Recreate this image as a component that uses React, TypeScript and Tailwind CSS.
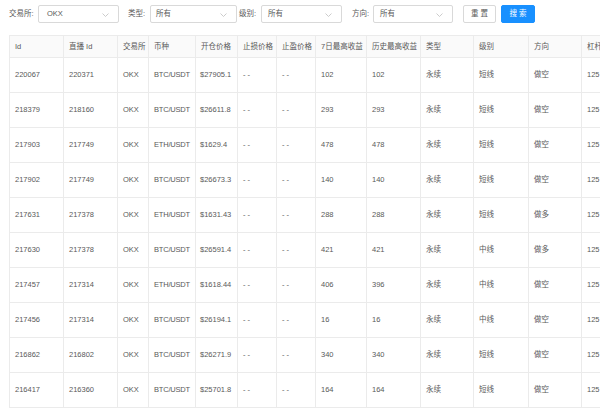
import React from "react";

const rows = [
  ["220067", "220371", "OKX", "BTC/USDT", "$27905.1", "102", "102", "永续", "短线", "做空"],
  ["218379", "218160", "OKX", "BTC/USDT", "$26611.8", "293", "293", "永续", "短线", "做空"],
  ["217903", "217749", "OKX", "ETH/USDT", "$1629.4", "478", "478", "永续", "短线", "做空"],
  ["217902", "217749", "OKX", "BTC/USDT", "$26673.3", "140", "140", "永续", "短线", "做空"],
  ["217631", "217378", "OKX", "ETH/USDT", "$1631.43", "288", "288", "永续", "短线", "做多"],
  ["217630", "217378", "OKX", "BTC/USDT", "$26591.4", "421", "421", "永续", "中线", "做多"],
  ["217457", "217314", "OKX", "ETH/USDT", "$1618.44", "406", "396", "永续", "中线", "做空"],
  ["217456", "217314", "OKX", "BTC/USDT", "$26194.1", "16", "16", "永续", "中线", "做空"],
  ["216862", "216802", "OKX", "BTC/USDT", "$26271.9", "340", "340", "永续", "短线", "做空"],
  ["216417", "216360", "OKX", "BTC/USDT", "$25701.8", "164", "164", "永续", "短线", "做空"],
];

const columns = [
  { title: "Id", w: "w-[54px]" },
  { title: "直播 Id", w: "w-[54px]" },
  { title: "交易所", w: "w-[31px]" },
  { title: "币种", w: "w-[47px]" },
  { title: "开仓价格", w: "w-[42px]" },
  { title: "止损价格", w: "w-[39px]" },
  { title: "止盈价格", w: "w-[39px]" },
  { title: "7日最高收益", w: "w-[51px]" },
  { title: "历史最高收益", w: "w-[54px]" },
  { title: "类型", w: "w-[53px]" },
  { title: "级别", w: "w-[55px]" },
  { title: "方向", w: "w-[53px]" },
  { title: "杠杆", w: "w-[50px]" },
];

function Chevron() {
  return (
    <svg width="7" height="4" viewBox="0 0 7 4" className="absolute right-[9px] top-[7px]">
      <path d="M0.5 0.5 L3.5 3.5 L6.5 0.5" fill="none" stroke="#bfbfbf" strokeWidth="0.8" />
    </svg>
  );
}

function Select({ value, width, pad }: { value: string; width: string; pad: string }) {
  return (
    <div className={`relative h-[18px] ${width} border border-[#d9d9d9] rounded-[2px] bg-white flex items-center ${pad} text-[#595959]`}>
      {value}
      <Chevron />
    </div>
  );
}

const cell = "border border-[#ebebeb] px-[5px] whitespace-nowrap overflow-hidden";

export default function App() {
  return (
    <div className="w-[600px] h-[413px] overflow-hidden bg-white pt-[5px] text-[7.5px] text-[#595959] [font-family:'Liberation_Sans','Noto_Sans_CJK_SC',sans-serif]">
      {/* filter bar */}
      <div className="flex items-center h-[18px] pl-[9px]">
        <span className="w-[29px] whitespace-nowrap">交易所:</span>
        <Select value="OKX" width="w-[81px]" pad="pl-[8px]" />
        <span className="ml-[9px] w-[22px] whitespace-nowrap">类型:</span>
        <Select value="所有" width="w-[87px]" pad="pl-[5px]" />
        <span className="ml-[2px] w-[22px] whitespace-nowrap">级别:</span>
        <Select value="所有" width="w-[81px]" pad="pl-[6px]" />
        <span className="ml-[10px] w-[21px] whitespace-nowrap">方向:</span>
        <Select value="所有" width="w-[80px]" pad="pl-[6px]" />
        <button className="ml-[10px] h-[18px] w-[33px] border border-[#d9d9d9] rounded-[2px] bg-white text-[#595959] tracking-[2px] pl-[2px]">
          重置
        </button>
        <button className="ml-[5px] h-[18px] w-[34px] border border-[#1890ff] rounded-[2px] bg-[#1890ff] text-white tracking-[2px] pl-[2px]">
          搜索
        </button>
      </div>

      {/* table */}
      <div className="mt-[12px] ml-[9px] overflow-hidden">
        <table className="table-fixed border-collapse w-[622px]">
          <thead>
            <tr className="h-[22px] bg-[#fafafa]">
              {columns.map((c) => (
                <th key={c.title} className={`${c.w} ${cell} text-left font-normal text-[#595959]`}>
                  {c.title}
                </th>
              ))}
            </tr>
          </thead>
          <tbody>
            {rows.map((r) => (
              <tr key={r[0]} className="h-[35px]">
                <td className={cell}>{r[0]}</td>
                <td className={cell}>{r[1]}</td>
                <td className={cell}>{r[2]}</td>
                <td className={`${cell} tracking-[-0.2px]`}>{r[3]}</td>
                <td className={`${cell} !px-[4px]`}>{r[4]}</td>
                <td className={cell}>- -</td>
                <td className={cell}>- -</td>
                <td className={cell}>{r[5]}</td>
                <td className={cell}>{r[6]}</td>
                <td className={cell}>{r[7]}</td>
                <td className={cell}>{r[8]}</td>
                <td className={cell}>{r[9]}</td>
                <td className={cell}>125</td>
              </tr>
            ))}
          </tbody>
        </table>
      </div>
    </div>
  );
}
